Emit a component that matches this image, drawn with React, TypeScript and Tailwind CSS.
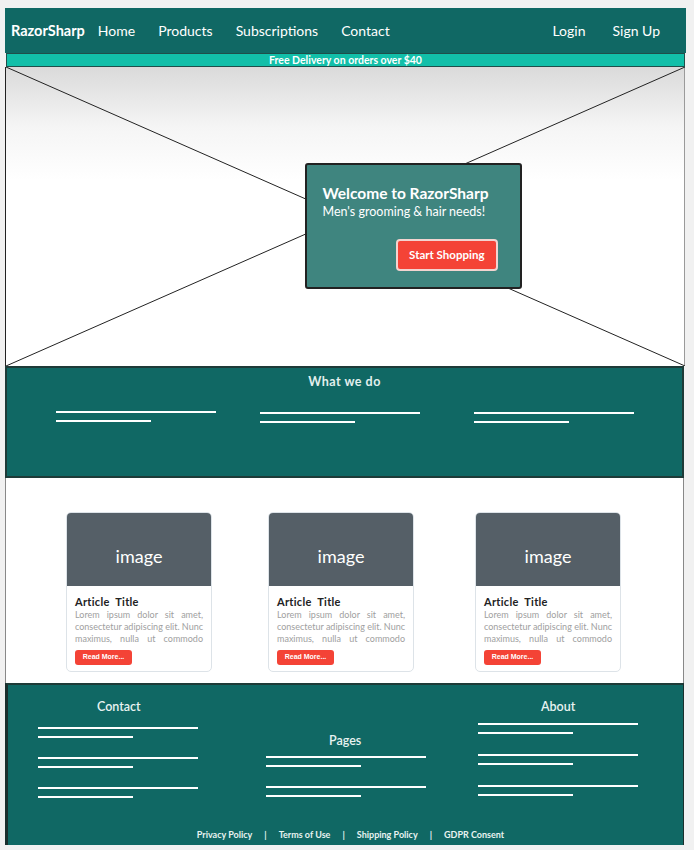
import React from "react";

const font = { fontFamily: "Lato, 'Noto Sans', sans-serif" };

function Lines({ className = "" }: { className?: string }) {
  return (
    <div className={"flex flex-col gap-[7px] " + className}>
      <div className="h-[2px] w-[160px] bg-white" />
      <div className="h-[2px] w-[95px] bg-white" />
    </div>
  );
}

function Card() {
  return (
    <div className="w-[146px] h-[160px] rounded-[5px] border border-[#dde3e8] bg-white overflow-hidden flex flex-col">
      <div className="h-[73px] bg-[#555f67] flex items-center justify-center pt-[14px]">
        <span className="text-white text-[18px]">image</span>
      </div>
      <div className="px-[8px] pt-[9px]">
        <div className="text-[11px] font-bold text-[#222] tracking-[0.3px] leading-[13px]">Article&nbsp; Title</div>
        <p className="text-[9px] leading-[12px] text-[#a0a0a0] text-justify [text-align-last:justify] mt-[1px]">
          Lorem ipsum dolor sit amet, consectetur adipiscing elit. Nunc maximus, nulla ut commodo
        </p>
        <div
          className="mt-[5px] w-[57px] h-[15px] rounded-[3px] bg-[#f44336] text-white text-[7px] font-bold flex items-center justify-center"
          style={{ fontFamily: "'Liberation Sans', Arial, sans-serif" }}
        >
          Read More...
        </div>
      </div>
    </div>
  );
}

export default function App() {
  return (
    <div className="min-h-[850px] bg-[#f1f1f1] pt-[8px] pl-[5px]" style={font}>
      <div className="w-[681px]">
        {/* Navbar */}
        <nav className="h-[45px] bg-[#106864] flex items-center text-white pl-[6px] pr-[26px]">
          <span className="font-bold text-[14.5px] mr-[13px]">RazorSharp</span>
          <div className="flex gap-[23px] text-[14px]">
            <span>Home</span>
            <span>Products</span>
            <span>Subscriptions</span>
            <span>Contact</span>
          </div>
          <div className="ml-auto flex gap-[27px] text-[14px]">
            <span>Login</span>
            <span>Sign Up</span>
          </div>
        </nav>
        {/* Banner */}
        <div className="ml-[1px] w-[679px] h-[14px] bg-[#12bfa9] border border-[#1f4e4a] flex items-center justify-center text-white text-[10.5px] font-bold leading-none">
          Free Delivery on orders over $40
        </div>
        {/* Hero */}
        <div className="relative w-[680px] h-[299px] border-l border-l-[#222] border-r border-r-[#9a9a9a] bg-gradient-to-b from-[#dadada] via-[#f5f5f5] via-[20%] to-white to-[38%] flex items-center justify-center">
          <svg className="absolute inset-0" width="679" height="299" viewBox="0 0 679 299">
            <line x1="0" y1="0" x2="679" y2="299" stroke="#222" strokeWidth="1" />
            <line x1="679" y1="0" x2="0" y2="299" stroke="#222" strokeWidth="1" />
          </svg>
          <div className="relative ml-[136px] mt-[19px] w-[217px] h-[126px] rounded-[3px] border-2 border-[#222] bg-[#3f857f] px-[16px] pt-[18px] text-white">
            <div className="text-[15.5px] font-bold leading-[20px]">Welcome to RazorSharp</div>
            <div className="text-[12.5px] leading-[18px]">Men's grooming &amp; hair needs!</div>
            <div className="flex justify-end mt-[18px] pr-[6px]">
              <div className="h-[32px] px-[11px] rounded-[4px] border-2 border-[#f3d4d0] bg-[#f44336] text-[11.5px] font-bold flex items-center">
                Start Shopping
              </div>
            </div>
          </div>
        </div>
        {/* What we do */}
        <section className="w-[679px] h-[112px] bg-[#106864] border-2 border-[#1e3b38] pt-[5px]">
          <div className="text-center text-[12.5px] font-bold text-[#e3f0ee] tracking-[0.5px]">What we do</div>
          <div className="flex mt-[19px] pl-[49px]">
            <Lines className="w-[204px]" />
            <Lines className="w-[214px] mt-[1px]" />
            <Lines className="mt-[1px]" />
          </div>
        </section>
        {/* Cards */}
        <section className="w-[679px] h-[205px] bg-white border-l border-l-[#888] border-r border-r-[#888] flex pl-[60px] pt-[34px]">
          <Card />
          <div className="ml-[56px]"><Card /></div>
          <div className="ml-[61px]"><Card /></div>
        </section>
        {/* Footer */}
        <footer className="w-[679px] h-[162px] bg-[#106864] border-t-2 border-t-[#1e3b38] border-l-[3px] border-l-[#1a2f2d] border-r border-r-[#1a2f2d] text-white relative">
          <div className="flex pl-[30px] pt-[14px]">
            <div className="w-[228px]">
              <div className="text-[12.5px] font-semibold text-[#e8f3f1] pl-[59px] leading-[16px]">Contact</div>
              <div className="flex flex-col gap-[19px] mt-[12px]">
                <Lines />
                <Lines />
                <Lines />
              </div>
            </div>
            <div className="w-[212px] pt-[34px]">
              <div className="text-[12.5px] font-semibold text-[#e8f3f1] pl-[63px] leading-[16px]">Pages</div>
              <div className="flex flex-col gap-[19px] mt-[7px]">
                <Lines />
                <Lines />
              </div>
            </div>
            <div>
              <div className="text-[12.5px] font-semibold text-[#e8f3f1] pl-[63px] leading-[16px]">About</div>
              <div className="flex flex-col gap-[20px] mt-[8px]">
                <Lines />
                <Lines />
                <Lines />
              </div>
            </div>
          </div>
          <div className="absolute bottom-[4px] left-0 right-0 flex justify-center gap-[12px] text-[9px] font-bold text-[#e8f3f1] pl-[10px]">
            <span>Privacy Policy</span>
            <span>|</span>
            <span>Terms of Use</span>
            <span>|</span>
            <span>Shipping Policy</span>
            <span>|</span>
            <span>GDPR Consent</span>
          </div>
        </footer>
      </div>
    </div>
  );
}
